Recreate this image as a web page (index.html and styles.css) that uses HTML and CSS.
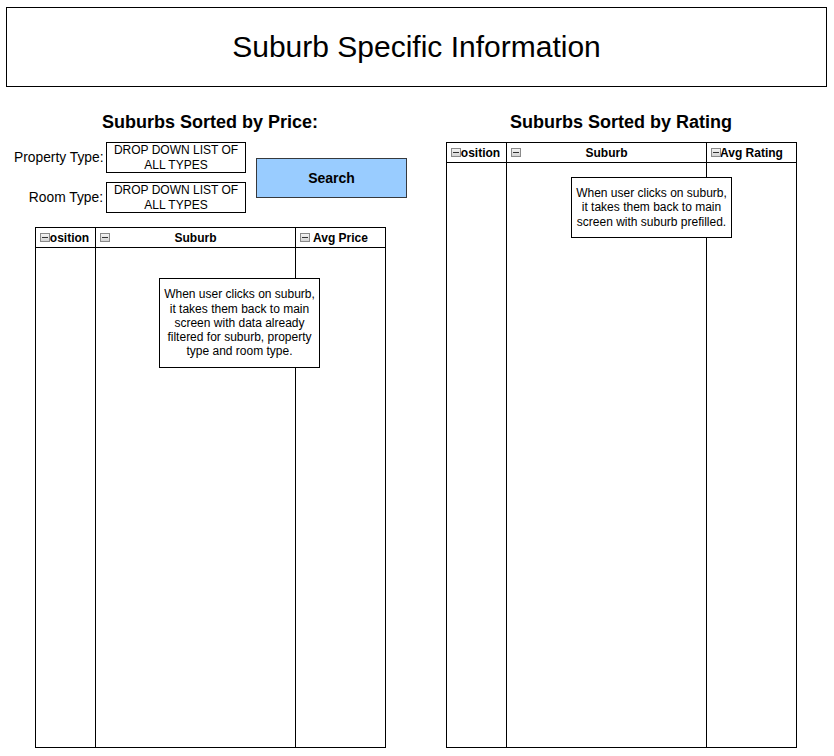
FILE: index.html
```html
<!DOCTYPE html>
<html lang="en">
<head>
<meta charset="UTF-8">
<title>Suburb Specific Information</title>
<link rel="stylesheet" href="styles.css">
</head>
<body>

<!-- Title -->
<header class="title-box">Suburb Specific Information</header>

<main class="columns">

  <!-- Left: sorted by price -->
  <section class="col col-left">
    <h2 class="heading">Suburbs Sorted by Price:</h2>

    <div class="filters">
      <label class="lbl">Property Type:</label>
      <div class="dropdown">DROP DOWN LIST OF<br>ALL TYPES</div>
      <button class="search">Search</button>
      <label class="lbl">Room Type:</label>
      <div class="dropdown">DROP DOWN LIST OF<br>ALL TYPES</div>
    </div>

    <div class="table table-left">
      <div class="th"><span class="tog"></span>Position</div>
      <div class="th"><span class="tog"></span>Suburb</div>
      <div class="th"><span class="tog"></span>Avg Price</div>
      <div class="td"></div>
      <div class="td"></div>
      <div class="td"></div>
      <div class="note note-left">When user clicks on suburb,<br>it takes them back to main<br>screen with data already<br>filtered for suburb, property<br>type and room type.</div>
    </div>
  </section>

  <!-- Right: sorted by rating -->
  <section class="col col-right">
    <h2 class="heading">Suburbs Sorted by Rating</h2>

    <div class="table table-right">
      <div class="th"><span class="tog"></span>Position</div>
      <div class="th"><span class="tog"></span>Suburb</div>
      <div class="th th-tight"><span class="tog"></span>Avg Rating</div>
      <div class="td"></div>
      <div class="td"></div>
      <div class="td"></div>
      <div class="note note-right">When user clicks on suburb,<br>it takes them back to main<br>screen with suburb prefilled.</div>
    </div>
  </section>

</main>

</body>
</html>
```

FILE: styles.css
```css
*{margin:0;padding:0;box-sizing:border-box}
html,body{height:100%;background:#fff;color:#000;font-family:'Liberation Sans',Arial,sans-serif}
body{padding:7px 0 0}

/* ---------------- Title ---------------- */
.title-box{margin:0 7px 0 6px;height:80px;border:1px solid #000;display:flex;align-items:center;justify-content:center;font-size:30px;font-weight:400}

/* ---------------- Columns ---------------- */
.columns{display:flex;padding-top:25px}
.col{display:flex;flex-direction:column}
.col-left{width:420px;padding-left:35px}
.col-right{padding-left:26px}
.heading{width:350px;text-align:center;font-size:18px;line-height:21px;font-weight:700}

/* ---------------- Filters ---------------- */
.filters{display:grid;grid-template-columns:89px 140px 160px;grid-template-rows:31px 31px;column-gap:3px;row-gap:9px;margin:9px 0 14px -21px;align-items:center}
.lbl{font-size:13.8px;text-align:right;white-space:nowrap}
.dropdown{height:31px;border:1px solid #000;display:flex;align-items:center;justify-content:center;text-align:center;font-size:12px;line-height:15px}
.search{grid-column:3;grid-row:1 / span 2;margin-left:7px;width:151px;height:40px;background:#99ccff;border:1px solid #36393d;font-family:inherit;font-size:14px;font-weight:700;color:#000}

/* ---------------- Tables ---------------- */
.table{position:relative;width:351px;display:grid;grid-template-columns:59px 200px 90px;grid-template-rows:20px 1fr;border:1px solid #000}
.table-left{height:521px}
.table-right{margin-top:9px;height:606px}
.th,.td{border-left:1px solid #000}
.th:first-child,.td:nth-child(4){border-left:none}
.th{position:relative;border-bottom:1px solid #000;font-size:12px;font-weight:700;line-height:20px;text-align:center;white-space:nowrap}
.th-tight{text-align:left;padding-left:13px}

/* small collapse toggle in header cells */
.tog{position:absolute;left:4px;top:5px;width:10px;height:9px;border:1px solid #8a8a8a;background:linear-gradient(#f4f4f4,#d4d4d4)}
.tog::after{content:"";position:absolute;left:1px;right:1px;top:3px;height:1px;background:#333}

/* ---------------- Notes ---------------- */
.note{position:absolute;width:161px;border:1px solid #000;background:#fff;display:flex;align-items:center;justify-content:center;text-align:center;font-size:12px;line-height:14.3px;white-space:nowrap}
.note-left{left:123px;top:50px;height:90px}
.note-right{left:124px;top:34px;height:61px}
```
